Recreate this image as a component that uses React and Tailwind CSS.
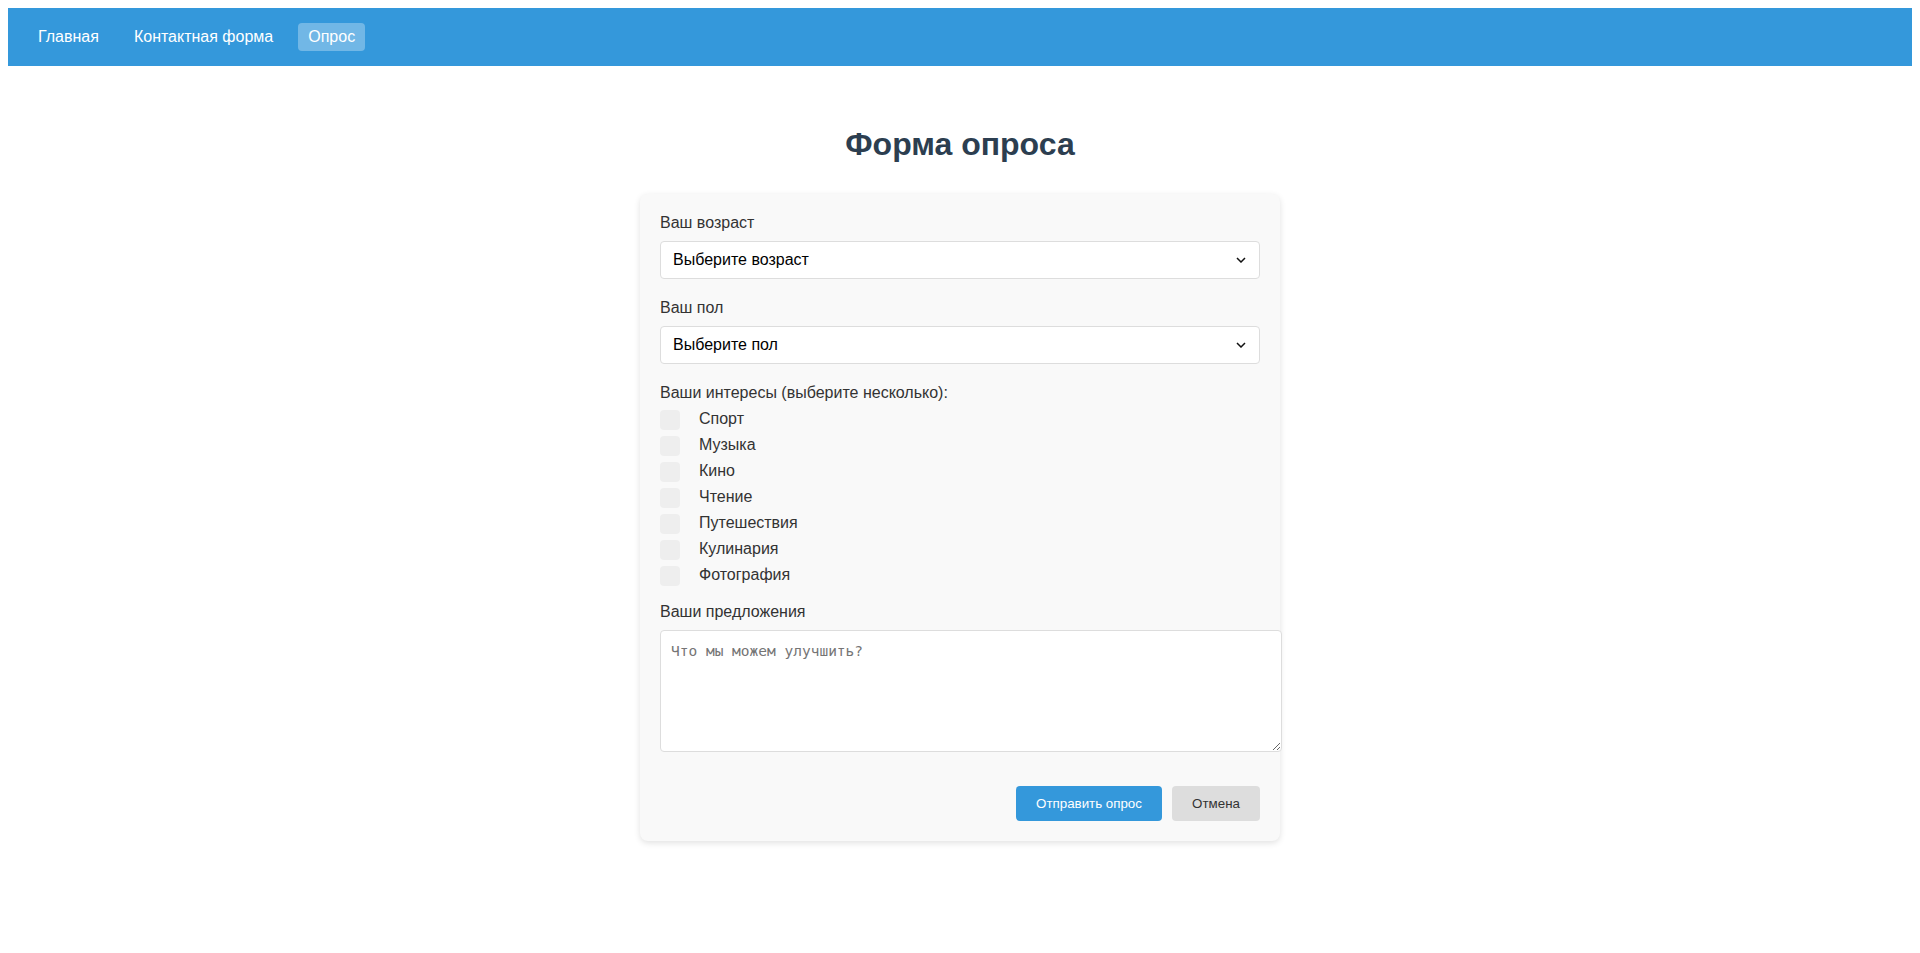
import React, { useState } from 'react';

const interests = ['Спорт', 'Музыка', 'Кино', 'Чтение', 'Путешествия', 'Кулинария', 'Фотография'];

const Chevron = () => (
  <svg
    className="pointer-events-none absolute right-[14px] top-1/2 -translate-y-1/2"
    width="10"
    height="6"
    viewBox="0 0 10 6"
    fill="none"
  >
    <path d="M1 1l4 4 4-4" stroke="#111" strokeWidth="1.5" />
  </svg>
);

const SelectField = ({ label, placeholder, options }) => {
  const [value, setValue] = useState('');
  return (
    <div className="mb-5">
      <label className="mb-[10px] block leading-[17px] text-[#333]">{label}</label>
      <div className="relative">
        <select
          value={value}
          onChange={(e) => setValue(e.target.value)}
          className="block h-[38px] w-full appearance-none rounded border border-[#ddd] bg-white pl-[12px] pr-[10px] text-base text-black outline-none"
        >
          <option value="">{placeholder}</option>
          {options.map((o) => (
            <option key={o} value={o}>
              {o}
            </option>
          ))}
        </select>
        <Chevron />
      </div>
    </div>
  );
};

const App = () => {
  const [checked, setChecked] = useState({});

  const toggle = (name) => setChecked((prev) => ({ ...prev, [name]: !prev[name] }));

  return (
    <div className="min-h-screen bg-white p-2 font-['Liberation_Sans',Arial,sans-serif] text-base">
      <nav className="flex gap-[15px] bg-[#3498db] px-5 py-[15px]">
        <a className="rounded px-[10px] py-[5px] leading-[18px] text-white" href="#">
          Главная
        </a>
        <a className="rounded px-[10px] py-[5px] leading-[18px] text-white" href="#">
          Контактная форма
        </a>
        <a className="rounded bg-white/30 px-[10px] py-[5px] leading-[18px] text-white" href="#">
          Опрос
        </a>
      </nav>

      <h1 className="mt-[60px] mb-[32px] text-center text-[32px] font-bold leading-[36px] text-[#2c3e50]">
        Форма опроса
      </h1>

      <form
        onSubmit={(e) => e.preventDefault()}
        className="mx-auto w-[640px] rounded-lg bg-[#f9f9f9] p-5 shadow-[0_2px_6px_rgba(0,0,0,0.12)]"
      >
        <SelectField
          label="Ваш возраст"
          placeholder="Выберите возраст"
          options={['До 18', '18-25', '26-35', '36-50', 'Старше 50']}
        />
        <SelectField label="Ваш пол" placeholder="Выберите пол" options={['Мужской', 'Женский']} />

        <div className="mb-[17px]">
          <label className="mb-[9px] block leading-[17px] text-[#333]">Ваши интересы (выберите несколько):</label>
          <div className="flex flex-col gap-[6px]">
            {interests.map((item) => (
              <label key={item} className="flex h-5 cursor-pointer items-start gap-[19px] text-[#333]">
                <span
                  onClick={() => toggle(item)}
                  className={`h-5 w-5 rounded ${checked[item] ? 'bg-[#3498db]' : 'bg-[#eee]'}`}
                />
                <span className="leading-[17px]">{item}</span>
              </label>
            ))}
          </div>
        </div>

        <div>
          <label className="mb-[10px] block leading-[17px] text-[#333]">Ваши предложения</label>
          <textarea
            placeholder="Что мы можем улучшить?"
            className="block h-[122px] w-[622px] rounded border border-[#ddd] bg-white p-[10px] font-['DejaVu_Sans_Mono',monospace] text-[14.5px] text-black outline-none placeholder:text-[#757575]"
          />
        </div>

        <div className="mt-[34px] flex justify-end gap-[10px]">
          <button
            type="submit"
            className="h-[35px] w-[146px] rounded bg-[#3498db] text-[13.33px] text-white"
          >
            Отправить опрос
          </button>
          <button type="button" className="h-[35px] w-[88px] rounded bg-[#ddd] text-[13.33px] text-[#333]">
            Отмена
          </button>
        </div>
      </form>
    </div>
  );
};

export default App;
